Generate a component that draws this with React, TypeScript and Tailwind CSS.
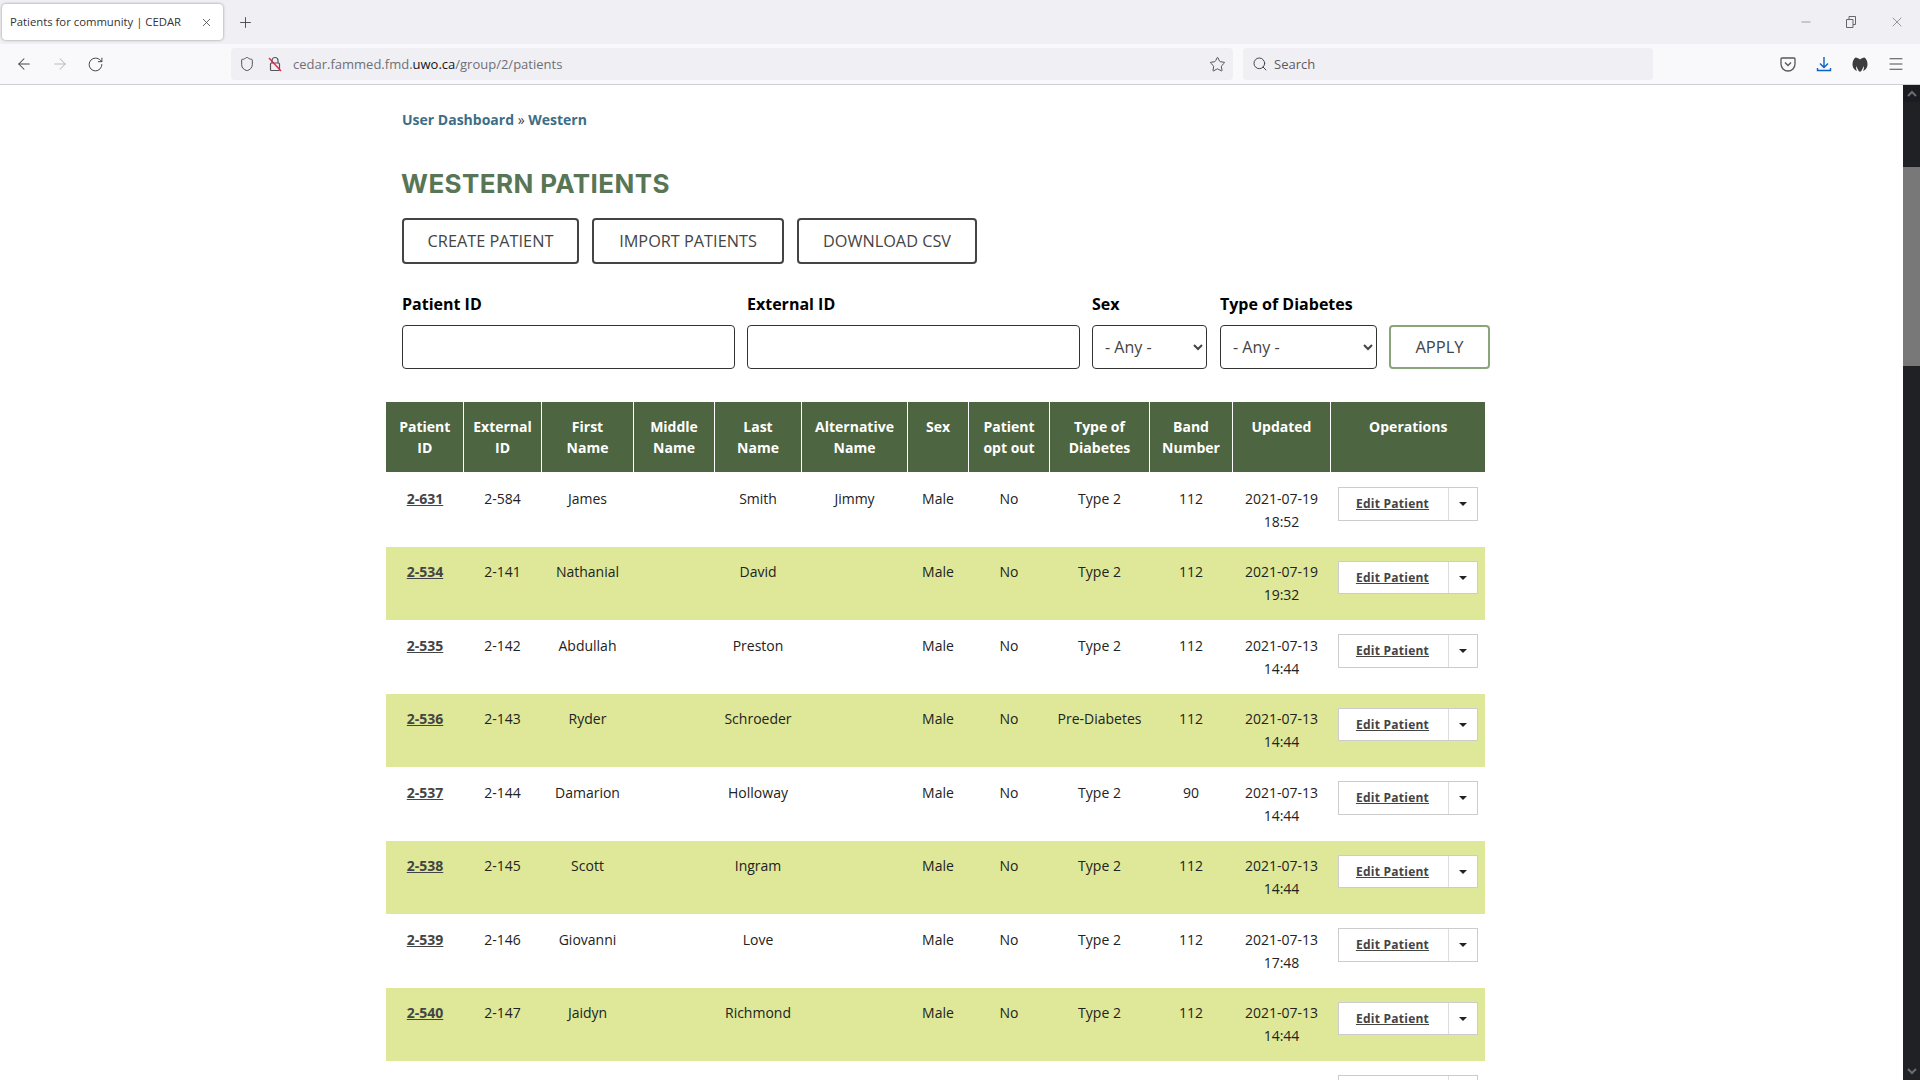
import { ArrowLeft, ArrowRight, Menu, Minus, Plus, RotateCw, Search, Shield, Star, X } from "lucide-react";

const columns = [
  { label: ["Patient", "ID"], width: "w-[77px]" },
  { label: ["External", "ID"], width: "w-[78px]" },
  { label: ["First", "Name"], width: "w-[92px]" },
  { label: ["Middle", "Name"], width: "w-[81px]" },
  { label: ["Last", "Name"], width: "w-[87px]" },
  { label: ["Alternative", "Name"], width: "w-[106px]" },
  { label: ["Sex"], width: "w-[61px]" },
  { label: ["Patient", "opt out"], width: "w-[81px]" },
  { label: ["Type of", "Diabetes"], width: "w-[100px]" },
  { label: ["Band", "Number"], width: "w-[83px]" },
  { label: ["Updated"], width: "w-[98px]" },
  { label: ["Operations"], width: "w-[155px]" },
];

const actions = [
  { label: "CREATE PATIENT", width: "w-[177px]" },
  { label: "IMPORT PATIENTS", width: "w-[192px]" },
  { label: "DOWNLOAD CSV", width: "w-[180px]" },
];

const patients = [
  ["2-631", "2-584", "James", "", "Smith", "Jimmy", "Male", "No", "Type 2", "112", "2021-07-19", "18:52"],
  ["2-534", "2-141", "Nathanial", "", "David", "", "Male", "No", "Type 2", "112", "2021-07-19", "19:32"],
  ["2-535", "2-142", "Abdullah", "", "Preston", "", "Male", "No", "Type 2", "112", "2021-07-13", "14:44"],
  ["2-536", "2-143", "Ryder", "", "Schroeder", "", "Male", "No", "Pre-Diabetes", "112", "2021-07-13", "14:44"],
  ["2-537", "2-144", "Damarion", "", "Holloway", "", "Male", "No", "Type 2", "90", "2021-07-13", "14:44"],
  ["2-538", "2-145", "Scott", "", "Ingram", "", "Male", "No", "Type 2", "112", "2021-07-13", "14:44"],
  ["2-539", "2-146", "Giovanni", "", "Love", "", "Male", "No", "Type 2", "112", "2021-07-13", "17:48"],
  ["2-540", "2-147", "Jaidyn", "", "Richmond", "", "Male", "No", "Type 2", "112", "2021-07-13", "14:44"],
];

function BrowserChrome() {
  return (
    <header className="shrink-0 font-['Open_Sans',sans-serif] text-[#45454d]">
      <div className="flex h-[44px] items-start bg-[#f0f0f4]">
        <div className="ml-[2px] mt-[4px] flex h-[36px] w-[221px] items-center justify-between rounded bg-white pl-[8px] pr-[10px] shadow-[0_0_3px_rgba(0,0,0,0.4)]">
          <span className="text-[11.300px] text-[#333]">Patients for community | CEDAR</span>
          <X size={13} strokeWidth={1.5} />
        </div>
        <div className="ml-[14px] mt-[14px]">
          <Plus size={17} strokeWidth={1.3} />
        </div>
        <div className="ml-auto mr-[15px] mt-[14px] flex items-center gap-[31px] text-[#666]">
          <Minus size={14} strokeWidth={1} />
          <svg width="14" height="14" viewBox="0 0 14 14" fill="none" stroke="currentColor">
            <path d="M2.5 4.5h6.500v8h-6.500z M5 4.500v-3h6.500v8h-2.500" />
          </svg>
          <X size={16} strokeWidth={1} />
        </div>
      </div>
      <div className="box-content flex h-[40px] items-center border-b border-[#cfcfd2] bg-[#f9f9fb]">
        <ArrowLeft size={18} strokeWidth={1.4} className="ml-[15px]" />
        <ArrowRight size={18} strokeWidth={1.4} className="ml-[18px] text-[#bbbbc0]" />
        <RotateCw size={17} strokeWidth={1.4} className="ml-[18px]" />
        <div className="ml-[127px] flex h-[32px] w-[1002px] items-center rounded bg-[#f0f0f4] pl-[8px] pr-[7px]">
          <Shield size={16} strokeWidth={1.4} />
          <svg width="16" height="16" viewBox="0 0 16 16" fill="none" className="ml-[12px]">
            <path d="M5 7V4.500a3 3 0 0 1 6 0V7" stroke="#55555c" strokeWidth="1.2" />
            <rect x="3.500" y="7" width="9" height="7.500" rx="1" stroke="#55555c" strokeWidth="1.2" />
            <path d="M2 2l12 13" stroke="#e0294a" strokeWidth="1.4" />
          </svg>
          <span className="ml-[10px] pt-[1px] text-[13px] text-[#6f6f75]">
            cedar.fammed.fmd.<span className="text-[#15141a]">uwo.ca</span>/group/2/patients
          </span>
          <Star size={17} strokeWidth={1.3} className="ml-auto" />
        </div>
        <div className="ml-[10px] flex h-[32px] w-[410px] items-center rounded bg-[#f0f0f4] pl-[9px]">
          <Search size={16} strokeWidth={1.5} />
          <span className="ml-[6px] pt-[1px] text-[13px] text-[#5b5b61]">Search</span>
        </div>
        <div className="ml-auto mr-[15px] flex items-center gap-[18px]">
          <svg width="18" height="18" viewBox="0 0 18 18" fill="none" stroke="#55555c" strokeWidth="1.300">
            <path d="M3 3h12a1 1 0 0 1 1 1v5a7 7 0 0 1-14 0V4a1 1 0 0 1 1-1z" />
            <path d="M6 7.500l3 3 3-3" />
          </svg>
          <svg width="18" height="18" viewBox="0 0 18 18" fill="none" stroke="#0b62c4" strokeWidth="1.400">
            <path d="M9 2v10M5 8.500l4 4 4-4M2.500 13v2.500h13V13" />
          </svg>
          <svg width="18" height="18" viewBox="0 0 18 18">
            <path
              fill="#3b3b40"
              d="M9 4.500C8 3.500 6 2.500 4.500 2.500 2.500 4 1.500 6.500 1.500 9.500c0 3 1.800 5.500 4.500 6.500-.8-1.500-1-3-1-5l3 5.500h2l3-5.500c0 2-.2 3.500-1 5 2.700-1 4.500-3.500 4.500-6.500 0-3-1-5.500-3-7C12 2.500 10 3.500 9 4.500z"
            />
          </svg>
          <Menu size={18} strokeWidth={1.3} />
        </div>
      </div>
    </header>
  );
}

function Scrollbar() {
  return (
    <div className="flex w-[17px] shrink-0 flex-col items-center bg-[#202124]">
      <div className="flex h-[17px] w-full items-center justify-center bg-[#1b1b22]">
        <svg width="10" height="7" viewBox="0 0 10 7" fill="none" stroke="#6d6d70" strokeWidth="2">
          <path d="M1 6l4-4 4 4" />
        </svg>
      </div>
      <div className="mt-[65px] h-[199px] w-full bg-[#787878]" />
      <div className="mt-auto flex h-[17px] w-full items-center justify-center">
        <svg width="10" height="7" viewBox="0 0 10 7" fill="none" stroke="#6d6d70" strokeWidth="2">
          <path d="M1 1l4 4 4-4" />
        </svg>
      </div>
    </div>
  );
}

function EditButton({ short }: { short: boolean }) {
  return (
    <div className={`flex w-[140px] border border-[#cccccc] bg-white text-[#444] ${short ? "h-[33px]" : "h-[34px]"}`}>
      <a href="#" className="flex flex-1 items-center justify-center pr-[2px] text-[12px] font-bold tracking-[0.25px] underline">
        Edit Patient
      </a>
      <div className="flex w-[29px] items-center justify-center border-l border-[#dddddd]">
        <span className="h-0 w-0 border-x-[4px] border-t-[4px] border-x-transparent border-t-[#222]" />
      </div>
    </div>
  );
}

function Filters() {
  const fieldClass = "mt-[10px] h-[44px] w-full rounded-[4px] border border-[#333] bg-white text-[16px] text-[#444]";
  const labelClass = "block h-[22px] font-bold leading-[22px] text-black";
  return (
    <form className="ml-[16px] mt-[29px] flex items-end text-[16px]">
      <label className="w-[333px]">
        <span className={labelClass}>Patient ID</span>
        <input className={`${fieldClass} px-[12px]`} />
      </label>
      <label className="ml-[12px] w-[333px]">
        <span className={labelClass}>External ID</span>
        <input className={`${fieldClass} px-[12px]`} />
      </label>
      <label className="ml-[12px] w-[115px]">
        <span className={labelClass}>Sex</span>
        <select className={`${fieldClass} pl-[8px]`}>
          <option>- Any -</option>
        </select>
      </label>
      <label className="ml-[13px] w-[157px]">
        <span className={labelClass}>Type of Diabetes</span>
        <select className={`${fieldClass} pl-[8px]`}>
          <option>- Any -</option>
        </select>
      </label>
      <button
        type="button"
        className="ml-[12px] h-[44px] w-[101px] rounded-[4px] border-2 border-[#8aa57c] bg-white pt-[1px] text-[16.500px] text-[#444]"
      >
        APPLY
      </button>
    </form>
  );
}

function PatientTable() {
  return (
    <table className="mt-[33px] w-[1099px] table-fixed border-collapse text-center text-[14px] text-[#222]">
      <colgroup>
        {columns.map((c) => (
          <col key={c.label.join(" ")} className={c.width} />
        ))}
      </colgroup>
      <thead>
        <tr className="h-[70px] bg-[#4d6541] text-white">
          {columns.map((c) => (
            <th
              key={c.label.join(" ")}
              className="border-x border-white pl-[1px] pt-[14px] align-top text-[14px] font-bold leading-[21px] first:border-l-0 last:border-r-0"
            >
              {c.label.map((line) => (
                <div key={line}>{line}</div>
              ))}
            </th>
          ))}
        </tr>
      </thead>
      <tbody>
        {patients.map((p, i) => {
          const green = i % 2 === 1;
          // first row sits 1px lower than the others, green rows are 1px shorter
          const rowClass = i === 0 ? "h-[75px] bg-white" : green ? "h-[73px] bg-[#dee898]" : "h-[74px] bg-white";
          const cellClass = `pl-[1px] align-top leading-[23px] ${i === 0 ? "pt-[15px]" : green ? "pt-[13px]" : "pt-[14px]"}`;
          return (
            <tr key={p[0]} className={rowClass}>
              <td className={cellClass}>
                <a href="#" className="font-bold text-[#444] underline">
                  {p[0]}
                </a>
              </td>
              {p.slice(1, 10).map((value, j) => (
                <td key={j} className={cellClass}>
                  {value}
                </td>
              ))}
              <td className={cellClass}>
                {p[10]}
                <br />
                {p[11]}
              </td>
              <td className={`pl-[8px] align-top ${i === 0 ? "pt-[15px]" : "pt-[14px]"}`}>
                <EditButton short={green} />
              </td>
            </tr>
          );
        })}
        <tr className="bg-white">
          <td colSpan={11} />
          <td className="pl-[8px] pt-[14px] align-top">
            <EditButton short={false} />
          </td>
        </tr>
      </tbody>
    </table>
  );
}

export default function App() {
  return (
    <div className="flex h-screen flex-col overflow-hidden bg-white font-['Open_Sans',sans-serif]">
      <BrowserChrome />
      <div className="flex min-h-0 flex-1">
        <main className="min-w-0 flex-1 overflow-hidden pl-[386px] pt-[24px]">
          <nav className="ml-[16px] text-[14px] font-bold leading-[22px] text-[#3c6e87]">
            <a href="#">User Dashboard</a> <span className="font-normal text-[#444]">»</span> <a href="#">Western</a>
          </nav>
          <h1 className="ml-[15px] mt-[38px] font-['Inter',sans-serif] text-[26px] font-bold leading-[30px] tracking-[0.4px] text-[#587556]">
            WESTERN PATIENTS
          </h1>
          <div className="ml-[16px] mt-[19px] flex gap-[13px]">
            {actions.map((a) => (
              <button
                key={a.label}
                type="button"
                className={`h-[46px] rounded-[4px] border-2 border-[#444] bg-white text-[16.300px] font-medium text-[#444] ${a.width}`}
              >
                {a.label}
              </button>
            ))}
          </div>
          <Filters />
          <PatientTable />
        </main>
        <Scrollbar />
      </div>
    </div>
  );
}
